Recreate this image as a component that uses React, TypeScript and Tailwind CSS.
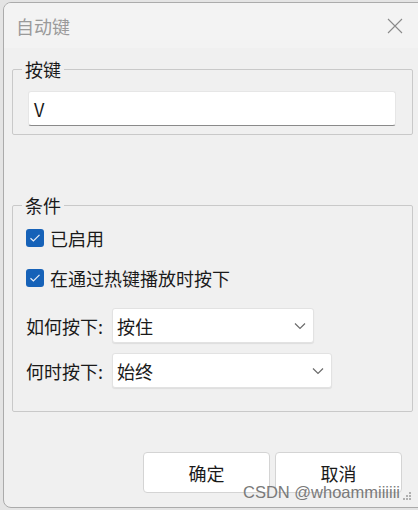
const Chevron = () => (
  <svg width="12" height="8" viewBox="0 0 12 8" className="text-[#6b6b6b]">
    <path d="M1 1.5 L6 6.5 L11 1.5" fill="none" stroke="currentColor" strokeWidth="1.2" />
  </svg>
)

const CheckBox = ({ label }: { label: string }) => (
  <div className="flex items-center h-[22px] gap-[6px]">
    <span className="w-[18px] h-[18px] rounded-[3px] bg-[#1662b8] flex items-center justify-center">
      <svg width="12" height="10" viewBox="0 0 12 10">
        <path d="M1.5 5.2 L4.4 8 L10.5 1.8" fill="none" stroke="#e8eef8" strokeWidth="1.2" />
      </svg>
    </span>
    <span>{label}</span>
  </div>
)

const SelectBox = ({ value, width }: { value: string; width: string }) => (
  <div
    className={`${width} h-[35px] bg-white border border-[#e2e2e2] rounded-[3px] shadow-[0_1px_1px_rgba(0,0,0,0.08)] flex items-center justify-between pl-[4px] pr-[7px]`}
  >
    <span>{value}</span>
    <Chevron />
  </div>
)

const App = () => {
  return (
    <div
      className="w-[418px] h-[510px] bg-[#e4e4e4] overflow-hidden relative text-[18px] leading-[22px] text-[#1a1a1a]"
      style={{ fontFamily: '"Noto Sans CJK SC", "Noto Sans", sans-serif' }}
    >
      <div className="ml-[3px] mt-[2px] w-[425px] h-[506px] border border-[#ababab] rounded-[8px] bg-[#f0f0f0] overflow-hidden relative">
        {/* title bar */}
        <div className="h-[45px] bg-[#f3f3f3] flex items-center justify-between pl-[12px] pr-[22px]">
          <span className="text-[#9a9a9a] pt-[1px]">自动键</span>
          <svg width="16" height="16" viewBox="0 0 16 16" className="mr-[2px]">
            <path d="M1 1 L15 15 M15 1 L1 15" stroke="#8a8a8a" strokeWidth="1.1" />
          </svg>
        </div>

        <div className="pt-[11px]">
          <fieldset className="ml-[8px] w-[401px] border border-[#c9c9c9] rounded-[2px] pl-[15px] pr-[16px] pb-[8px]">
            <legend className="ml-[-6px] px-[3px] leading-[20px]">按键</legend>
            <div className="mt-[12px] h-[35px] bg-white rounded-[3px] border border-[#e6e6e6] border-b-[#8a8a8a] flex items-center pl-[5px]">
              V
            </div>
          </fieldset>

          <fieldset className="mt-[60px] ml-[8px] w-[401px] h-[217px] border border-[#c9c9c9] rounded-[2px] pl-[13px] pr-[16px]">
            <legend className="ml-[-4px] px-[3px] leading-[20px]">条件</legend>
            <div className="mt-[12px] flex flex-col gap-[18px]">
              <CheckBox label="已启用" />
              <CheckBox label="在通过热键播放时按下" />
            </div>
            <div className="mt-[19px] flex flex-col gap-[10px]">
              <div className="flex items-center">
                <span className="w-[86px]">如何按下:</span>
                <SelectBox value="按住" width="w-[202px]" />
              </div>
              <div className="flex items-center">
                <span className="w-[86px]">何时按下:</span>
                <SelectBox value="始终" width="w-[220px]" />
              </div>
            </div>
          </fieldset>

          <div className="mt-[40px] ml-[139px] flex gap-[5px]">
            <button className="w-[127px] h-[41px] bg-white border border-[#d4d4d4] rounded-[4px] text-[18px]">
              确定
            </button>
            <button className="w-[127px] h-[41px] bg-white border border-[#d4d4d4] rounded-[4px] text-[18px]">
              取消
            </button>
          </div>
        </div>

        <div className="absolute left-[399px] top-[489px] grid grid-cols-3 gap-[1px]">
          {[0, 0, 1, 0, 1, 1, 1, 1, 1].map((v, i) => (
            <span key={i} className={`w-[2px] h-[2px] ${v ? 'bg-[#b0b0b0]' : ''}`} />
          ))}
        </div>
      </div>

      <span
        className="absolute left-[243px] top-[482px] text-[16.5px] leading-[20px] text-[#7a7a7a]"
        style={{ fontFamily: '"Liberation Sans", Arial, sans-serif' }}
      >
        CSDN @whoammiiiiii
      </span>
    </div>
  )
}

export default App
